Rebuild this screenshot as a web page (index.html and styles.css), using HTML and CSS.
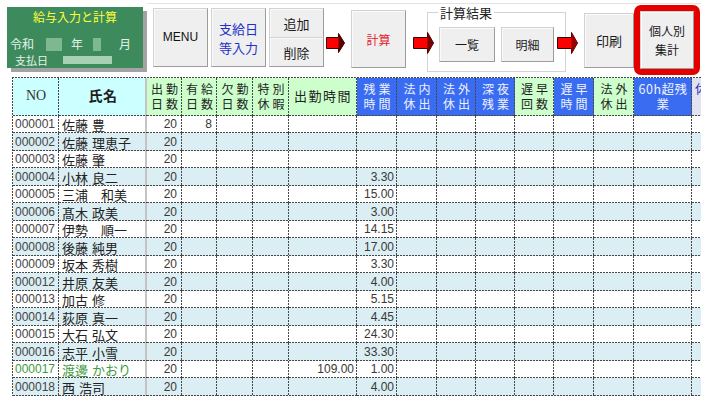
FILE: index.html
```html
<!DOCTYPE html>
<html lang="ja">
<head>
<meta charset="utf-8">
<title>給与入力と計算</title>
<link rel="stylesheet" href="styles.css">
</head>
<body>
<header class="topbar">
  <div class="panel">
    <div class="panel-title">給与入力と計算</div>
    <div class="panel-row">令和<span class="mask m1"></span>年<span class="mask m2"></span>月</div>
    <div class="panel-row2">支払日<span class="mask m3"></span></div>
  </div>
  <button class="btn menu">MENU</button>
  <button class="btn kyu">支給日<br>等入力</button>
  <div class="stack">
    <button class="btn add">追加</button>
    <button class="btn del">削除</button>
  </div>
  <svg class="arrow a1" width="19" height="20" viewBox="0 0 19 20"><path d="M0.5 4.5H12.5V0.5L18.5 10L12.5 19.5V15.5H0.5Z" fill="#ff0000" stroke="#3a0000"/><path d="M12.5 0.5L18.5 10L12.5 19.5Z" fill="#5a0000"/></svg>
  <button class="btn calc">計算</button>
  <svg class="arrow a2" width="21" height="22" viewBox="0 0 21 22"><path d="M0.5 5.5H14.5V0.5L20.5 11L14.5 21.5V16.5H0.5Z" fill="#ff0000" stroke="#3a0000"/><path d="M14.5 0.5L20.5 11L14.5 21.5Z" fill="#7a0000"/></svg>
  <fieldset class="group">
    <legend>計算結果</legend>
    <div class="group-row">
      <button class="btn list">一覧</button>
      <button class="btn detail">明細</button>
    </div>
  </fieldset>
  <svg class="arrow a3" width="21" height="22" viewBox="0 0 21 22"><path d="M0.5 5.5H14.5V0.5L20.5 11L14.5 21.5V16.5H0.5Z" fill="#ff0000" stroke="#3a0000"/><path d="M14.5 0.5L20.5 11L14.5 21.5Z" fill="#9a0000"/></svg>
  <button class="btn print">印刷</button>
  <div class="hilite"><button class="btn kojin">個人別<br>集計</button></div>
</header>

<div class="sheet-wrap">
<table class="sheet">
  <colgroup>
    <col style="width:46px"><col style="width:88px"><col style="width:35px"><col style="width:35px">
    <col style="width:36px"><col style="width:36px"><col style="width:68px"><col style="width:40px">
    <col style="width:40px"><col style="width:39px"><col style="width:39px"><col style="width:39px">
    <col style="width:40px"><col style="width:40px"><col style="width:58px"><col style="width:40px">
  </colgroup>
  <thead>
    <tr class="hdr">
      <th class="cy no-h">NO</th>
      <th class="cy nm nm-h">氏名</th>
      <th class="gr two">出勤<br>日数</th>
      <th class="gr two">有給<br>日数</th>
      <th class="gr two">欠勤<br>日数</th>
      <th class="gr two">特別<br>休暇</th>
      <th class="gr one">出勤時間</th>
      <th class="bl two">残業<br>時間</th>
      <th class="bl two">法内<br>休出</th>
      <th class="bl two">法外<br>休出</th>
      <th class="bl two">深夜<br>残業</th>
      <th class="gr two">遅早<br>回数</th>
      <th class="bl two">遅早<br>時間</th>
      <th class="gr two">法外<br>休出</th>
      <th class="bl sixty">60h超残<br>業</th>
      <th class="lv">休</th>
    </tr>
  </thead>
  <tbody>
    <tr class="r"><td class="no">000001</td><td class="nm">佐藤 豊</td><td class="num d">20</td><td class="num d">8</td><td></td><td></td><td></td><td></td><td></td><td></td><td></td><td></td><td></td><td></td><td></td><td></td></tr>
    <tr class="r alt"><td class="no">000002</td><td class="nm">佐藤 理恵子</td><td class="num d">20</td><td></td><td></td><td></td><td></td><td></td><td></td><td></td><td></td><td></td><td></td><td></td><td></td><td></td></tr>
    <tr class="r"><td class="no">000003</td><td class="nm">佐藤 肇</td><td class="num d">20</td><td></td><td></td><td></td><td></td><td></td><td></td><td></td><td></td><td></td><td></td><td></td><td></td><td></td></tr>
    <tr class="r alt"><td class="no">000004</td><td class="nm">小林 良二</td><td class="num d">20</td><td></td><td></td><td></td><td></td><td class="num">3.30</td><td></td><td></td><td></td><td></td><td></td><td></td><td></td><td></td></tr>
    <tr class="r"><td class="no">000005</td><td class="nm">三浦　和美</td><td class="num d">20</td><td></td><td></td><td></td><td></td><td class="num">15.00</td><td></td><td></td><td></td><td></td><td></td><td></td><td></td><td></td></tr>
    <tr class="r alt"><td class="no">000006</td><td class="nm">髙木 政美</td><td class="num d">20</td><td></td><td></td><td></td><td></td><td class="num">3.00</td><td></td><td></td><td></td><td></td><td></td><td></td><td></td><td></td></tr>
    <tr class="r"><td class="no">000007</td><td class="nm">伊勢　順一</td><td class="num d">20</td><td></td><td></td><td></td><td></td><td class="num">14.15</td><td></td><td></td><td></td><td></td><td></td><td></td><td></td><td></td></tr>
    <tr class="r alt"><td class="no">000008</td><td class="nm">後藤 純男</td><td class="num d">20</td><td></td><td></td><td></td><td></td><td class="num">17.00</td><td></td><td></td><td></td><td></td><td></td><td></td><td></td><td></td></tr>
    <tr class="r"><td class="no">000009</td><td class="nm">坂本 秀樹</td><td class="num d">20</td><td></td><td></td><td></td><td></td><td class="num">3.30</td><td></td><td></td><td></td><td></td><td></td><td></td><td></td><td></td></tr>
    <tr class="r alt"><td class="no">000012</td><td class="nm">井原 友美</td><td class="num d">20</td><td></td><td></td><td></td><td></td><td class="num">4.00</td><td></td><td></td><td></td><td></td><td></td><td></td><td></td><td></td></tr>
    <tr class="r"><td class="no">000013</td><td class="nm">加古 修</td><td class="num d">20</td><td></td><td></td><td></td><td></td><td class="num">5.15</td><td></td><td></td><td></td><td></td><td></td><td></td><td></td><td></td></tr>
    <tr class="r alt"><td class="no">000014</td><td class="nm">荻原 真一</td><td class="num d">20</td><td></td><td></td><td></td><td></td><td class="num">4.45</td><td></td><td></td><td></td><td></td><td></td><td></td><td></td><td></td></tr>
    <tr class="r"><td class="no">000015</td><td class="nm">大石 弘文</td><td class="num d">20</td><td></td><td></td><td></td><td></td><td class="num">24.30</td><td></td><td></td><td></td><td></td><td></td><td></td><td></td><td></td></tr>
    <tr class="r alt"><td class="no">000016</td><td class="nm">志平 小雪</td><td class="num d">20</td><td></td><td></td><td></td><td></td><td class="num">33.30</td><td></td><td></td><td></td><td></td><td></td><td></td><td></td><td></td></tr>
    <tr class="r green"><td class="no">000017</td><td class="nm">渡邊 かおり</td><td class="num d">20</td><td></td><td></td><td></td><td class="num">109.00</td><td class="num">1.00</td><td></td><td></td><td></td><td></td><td></td><td></td><td></td><td></td></tr>
    <tr class="r alt"><td class="no">000018</td><td class="nm">西 浩司</td><td class="num d">20</td><td></td><td></td><td></td><td></td><td class="num">4.00</td><td></td><td></td><td></td><td></td><td></td><td></td><td></td><td></td></tr>
  </tbody>
</table>
</div>
</body>
</html>
```

FILE: styles.css
```css
html, body {
  margin: 0;
  width: 701px;
  height: 396px;
  overflow: hidden;
  background: #fff;
}
body {
  font-family: "Noto Sans CJK JP", "Liberation Sans", sans-serif;
  color: #222;
}

/* ---------- top bar ---------- */
.topbar {
  display: flex;
  align-items: flex-start;
  height: 77px;
  padding-left: 7px;
  box-sizing: border-box;
  background: linear-gradient(#e3e3e3, #e3e3e3) 147px 3px / 100% 1px no-repeat;
}

.panel {
  width: 136px;
  height: 61px;
  margin-top: 7px;
  padding-top: 3px;
  box-sizing: border-box;
  background: #3d8b5c;
  box-shadow: 4px 4px 0 #a3a3a3;
  color: #e6f3ea;
  flex: none;
}
.panel-title {
  text-align: center;
  color: #ffff38;
  font-size: 12px;
  line-height: 14px;
}
.panel-row {
  display: flex;
  align-items: center;
  margin-top: 13px;
  padding-left: 3px;
  font-size: 12px;
  line-height: 14px;
}
.panel-row2 {
  display: flex;
  align-items: center;
  margin-top: 2px;
  padding-left: 8px;
  font-size: 11px;
  line-height: 14px;
}
.mask {
  display: inline-block;
  background: #7db892;
  filter: blur(0.7px);
}
.m1 { width: 16px; height: 13px; margin: 0 9px 0 12px; }
.m2 { width: 8px; height: 13px; margin: 0 18px 0 10px; }
.m3 { width: 49px; height: 8px; margin-left: 15px; background: #a8d0b5; }

.btn {
  box-sizing: border-box;
  margin: 0;
  padding: 0;
  flex: none;
  background: #efefef;
  border: 1px solid;
  border-color: #d2d2d2 #9c9c9c #9c9c9c #d2d2d2;
  box-shadow: inset 1px 1px 0 #fafafa;
  font-family: "Noto Sans CJK JP", "Liberation Sans", sans-serif;
  font-size: 13px;
  line-height: 19px;
  color: #1a1a1a;
}
.menu {
  width: 55px;
  height: 59px;
  margin: 8px 0 0 10px;
  font-family: "Liberation Sans", sans-serif;
  font-size: 12px;
  color: #111;
}
.kyu {
  width: 55px;
  height: 59px;
  margin: 8px 0 0 3px;
  color: #1d32c8;
}
.stack {
  display: flex;
  flex-direction: column;
  margin: 8px 0 0 3px;
  flex: none;
}
.stack .btn { width: 55px; height: 30px; }
.stack .del { margin-top: -1px; }

.arrow { flex: none; position: relative; z-index: 1; display: block; }
.a1 { margin: 33px 0 0 2px; }
.a2 { margin: 32px 0 0 7px; }
.a3 { margin: 32px 0 0 -9px; }

.calc {
  width: 55px;
  height: 58px;
  margin: 10px 0 0 6px;
  color: #e3202a;
  font-size: 12px;
}

.group {
  flex: none;
  width: 139px;
  height: 67px;
  margin: 5px 0 0 -7px;
  padding: 0;
  box-sizing: border-box;
  border: 1px solid #d3d3d3;
  min-width: 0;
}
.group legend {
  margin-left: 10px;
  padding: 0 2px;
  font-size: 13px;
  line-height: 15px;
  color: #222;
}
.group-row {
  display: flex;
  margin: 7px 0 0 11px;
}
.list { width: 56px; height: 35px; font-size: 12px; }
.detail { width: 53px; height: 35px; margin-left: 6px; font-size: 12px; }

.print {
  width: 50px;
  height: 55px;
  margin: 13px 0 0 6px;
}
.hilite {
  flex: none;
  width: 66px;
  height: 70px;
  margin-top: 5px;
  box-sizing: border-box;
  border: 6px solid #e50000;
  border-radius: 7px;
}
.kojin {
  width: 100%;
  height: 100%;
  font-size: 12px;
  line-height: 19px;
}

/* ---------- sheet ---------- */
.sheet-wrap {
  --ln: #474747;
  margin-left: 12px;
  padding: 1px 0 0 1px;
  width: max-content;
  background-image:
    repeating-linear-gradient(90deg, var(--ln) 0 2px, transparent 2px 3px),
    repeating-linear-gradient(180deg, var(--ln) 0 2px, transparent 2px 3px);
  background-size: 100% 1px, 1px 100%;
  background-position: 0 0, 0 0;
  background-repeat: no-repeat;
}
.sheet {
  border-collapse: separate;
  border-spacing: 0;
  table-layout: fixed;
  width: 719px;
}
.sheet th, .sheet td {
  padding: 0;
  white-space: nowrap;
  overflow: hidden;
  background-color: #fff;
  background-image:
    repeating-linear-gradient(90deg, var(--ln) 0 2px, transparent 2px 3px),
    repeating-linear-gradient(180deg, var(--ln) 0 2px, transparent 2px 3px);
  background-size: 100% 1px, 1px 100%;
  background-position: 0 100%, 100% 0;
  background-repeat: no-repeat;
}
.sheet .nm {
  background-image:
    repeating-linear-gradient(90deg, var(--ln) 0 2px, transparent 2px 3px),
    linear-gradient(#c4c4c4, #c4c4c4);
  background-size: 100% 1px, 2px 100%;
}

.hdr { height: 38px; }
.hdr th {
  font-weight: normal;
  font-size: 12px;
  line-height: 15px;
  color: #1e1e1e;
  text-align: center;
  vertical-align: middle;
  padding-bottom: 3px;
  box-sizing: border-box;
}
.hdr .two { letter-spacing: 3px; padding-left: 3px; }
.hdr .one { letter-spacing: 1.5px; font-size: 13px; }
.hdr .cy { background-color: #ccffff; }
.hdr .gr { background-color: #ccffcc; }
.hdr .bl { background-color: #3a6cf2; color: #eef2ff; }
.hdr .lv { background-color: #e2e2f0; color: #2030c0; text-align: left; padding-left: 3px; vertical-align: top; padding-top: 3px; }
.hdr .no-h {
  font-family: "Liberation Serif", serif;
  font-size: 14px;
  color: #333;
}
.hdr .nm-h { font-weight: bold; font-size: 14px; letter-spacing: 0.5px; }
.hdr .sixty { letter-spacing: 0.5px; font-size: 12.5px; }

.r { height: 17px; }
.r.alt { height: 18px; }
.r td { line-height: 15px; font-size: 12px; }
.r.alt td { background-color: #daeef3; }

td.no {
  padding-left: 2px;
  font-family: "Liberation Sans", sans-serif;
  font-size: 12px;
  color: #454545;
}
td.nm {
  padding-left: 3px;
  font-size: 13px;
  color: #222;
  word-spacing: 1px;
}
td.num {
  text-align: right;
  padding-right: 3px;
  font-family: "Liberation Sans", sans-serif;
  font-size: 12px;
  color: #383838;
}
td.num.d { padding-right: 5px; }
.green td.no, .green td.nm { color: #3f9b3f; }
```
